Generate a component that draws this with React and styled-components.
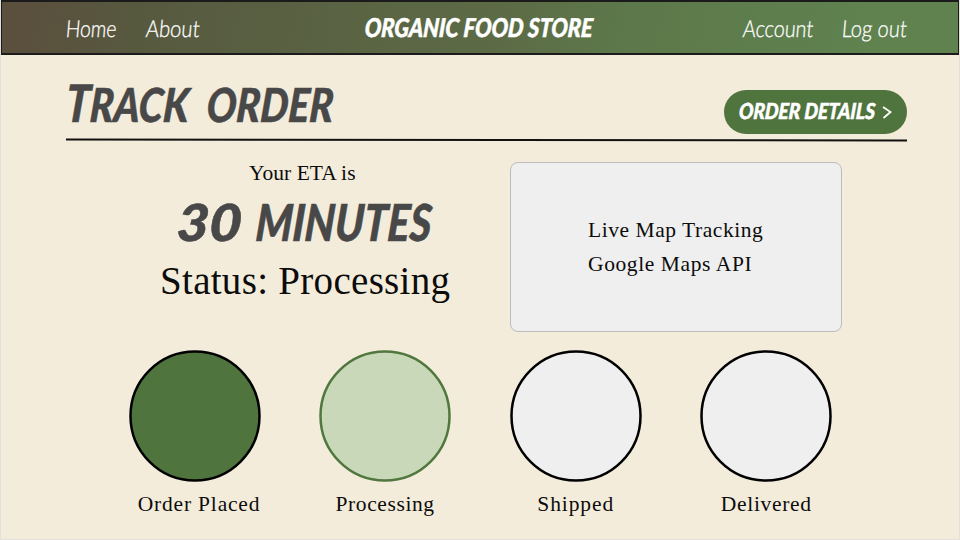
import React from 'react';
import styled, { createGlobalStyle } from 'styled-components';

const GlobalStyle = createGlobalStyle`
  * { box-sizing: border-box; }
  body { margin: 0; background: #f4ecdb; }
  h1, p { margin: 0; font-weight: 400; }
`;

const Page = styled.div`
  width: 960px;
  height: 540px;
  overflow: hidden;
  background: #f4ecdb;
  border: 1px solid #e3e0da;
  border-top: 0;
  display: flex;
  flex-direction: column;
  font-family: 'Liberation Serif', serif;
  color: #0c0c0c;
`;

const Header = styled.header`
  height: 55px;
  flex: none;
  display: flex;
  align-items: center;
  padding: 0 0 2px 64px;
  border: 1px solid #1b1b1b;
  border-width: 2px 1px 2px 1px;
  background: linear-gradient(100deg, #5a503d 3%, #57593f 14%, #5c6b46 52%, #5d784a 65%, #5f824f 90%);
`;

const Nav = styled.nav`
  width: ${(p) => p.$width}px;
  display: flex;
  gap: ${(p) => p.$gap}px;
`;

const NavLink = styled.a`
  width: ${(p) => p.$width}px;
  font: 300 23.5px/30px Lato, sans-serif;
  color: #fff;
  white-space: nowrap;
  -webkit-text-stroke: 0.3px #fff;
  transform: translateY(1px) skewX(-5deg) scaleX(${(p) => p.$stretch});
  transform-origin: left center;
`;

const Brush = styled.span`
  display: block;
  flex: none;
  width: ${(p) => p.$width}px;
  font: italic 900 ${(p) => p.$size}px/${(p) => p.$line}px Lato, sans-serif;
  color: ${(p) => p.$color || '#484848'};
  -webkit-text-stroke: 0.5px ${(p) => p.$color || '#484848'};
  word-spacing: ${(p) => p.$gap || 0}px;
  white-space: nowrap;
  transform: skewX(-4deg) scaleX(${(p) => p.$stretch});
  transform-origin: left center;

  &::first-letter { font-size: ${(p) => p.$initial || 1}em; }
`;

const Main = styled.main`
  padding: 0 52px 0 65px;
`;

const TitleRow = styled.div`
  height: 84px;
  display: flex;
  justify-content: space-between;
  padding-top: 23px;
`;

const Title = styled.h1`
  height: 48px;
`;

const DetailsButton = styled.button`
  width: 183px;
  height: 44px;
  margin-top: 12px;
  padding: 0 15px 2px;
  border: 0;
  border-radius: 22px;
  background: #50743d;
  display: flex;
  align-items: center;
  justify-content: space-between;
`;

const Chevron = styled.svg`
  width: 10px;
  height: 13px;
  margin-top: 3px;
`;

const Rule = styled.div`
  width: 841px;
  height: 1.6px;
  background: #111;
  transform: rotate(0.07deg);
`;

const Overview = styled.section`
  height: 170px;
  margin-top: 21px;
  display: flex;
`;

const Summary = styled.div`
  width: 444px;
  padding-left: 94px;
`;

const Words = styled.p`
  font-size: ${(p) => p.$size}px;
  line-height: ${(p) => p.$line}px;
  letter-spacing: ${(p) => p.$spacing}px;
  margin-left: ${(p) => p.$indent || 0}px;
  white-space: nowrap;
`;

const Eta = styled.div`
  margin: 11px 0 9px 17px;
  display: flex;
  gap: 15px;
`;

const MapCard = styled.div`
  width: 332px;
  height: 170px;
  padding: 50px 0 0 77px;
  background: #efefef;
  border: 1px solid #bcbcbc;
  border-radius: 8px;
`;

const Steps = styled.ol`
  list-style: none;
  margin: 18px 0 0 63px;
  padding: 0;
  display: flex;
  gap: 59.6px;
`;

const Step = styled.li`
  width: 131px;
  display: flex;
  flex-direction: column;
  align-items: center;
`;

const Dot = styled.svg`
  width: 132px;
  height: 132px;
  margin-bottom: 8px;
  fill: ${(p) => p.$fill};
  stroke: ${(p) => p.$stroke};
  stroke-width: 2.5px;
`;

const steps = [
  { label: 'Order Placed', fill: '#50743d', stroke: '#000', spacing: 0.8, indent: 9 },
  { label: 'Processing', fill: '#c9d8b8', stroke: '#50773e', spacing: 0.6 },
  { label: 'Shipped', fill: '#efefef', stroke: '#000', spacing: 0.9 },
  { label: 'Delivered', fill: '#efefef', stroke: '#000', spacing: 0.7 },
];

export default function App() {
  return (
    <Page>
      <GlobalStyle />
      <Header>
        <Nav $width={299} $gap={30}>
          <NavLink $width={50} $stretch={0.82}>Home</NavLink>
          <NavLink $width={54} $stretch={0.86}>About</NavLink>
        </Nav>
        <Brush $size={26} $line={32} $width={378} $stretch={0.84} $color="#fff">ORGANIC FOOD STORE</Brush>
        <Nav $gap={29}>
          <NavLink $width={70} $stretch={0.84}>Account</NavLink>
          <NavLink $width={65} $stretch={0.85}>Log out</NavLink>
        </Nav>
      </Header>
      <Main>
        <TitleRow>
          <Title>
            <Brush $size={47} $line={48} $width={268} $stretch={0.84} $initial={1.1} $gap={11}>TRACK ORDER</Brush>
          </Title>
          <DetailsButton>
            <Brush $size={22} $line={26} $width={137} $stretch={0.87} $color="#fff">ORDER DETAILS</Brush>
            <Chevron viewBox="0 0 10 13" fill="none" stroke="#fff" strokeWidth="1.8">
              <path d="M1 1 L8.5 6 L1.5 12" />
            </Chevron>
          </DetailsButton>
        </TitleRow>
        <Rule />
        <Overview>
          <Summary>
            <Words $size={21.5} $line={22} $spacing={0.05} $indent={89}>Your ETA is</Words>
            <Eta>
              <Brush $size={51} $line={54} $width={64} $stretch={1.1}>30</Brush>
              <Brush $size={51} $line={54} $width={176} $stretch={0.82}>MINUTES</Brush>
            </Eta>
            <Words $size={39} $line={46} $spacing={0.3}>Status: Processing</Words>
          </Summary>
          <MapCard>
            <Words $size={21.5} $line={34} $spacing={0.55}>Live Map Tracking</Words>
            <Words $size={21.5} $line={34} $spacing={0.6}>Google Maps API</Words>
          </MapCard>
        </Overview>
        <Steps>
          {steps.map((s) => (
            <Step key={s.label}>
              <Dot viewBox="0 0 132 132" $fill={s.fill} $stroke={s.stroke}>
                <circle cx="66" cy="66" r="64.5" />
              </Dot>
              <Words $size={21.5} $line={28} $spacing={s.spacing} $indent={s.indent}>{s.label}</Words>
            </Step>
          ))}
        </Steps>
      </Main>
    </Page>
  );
}
